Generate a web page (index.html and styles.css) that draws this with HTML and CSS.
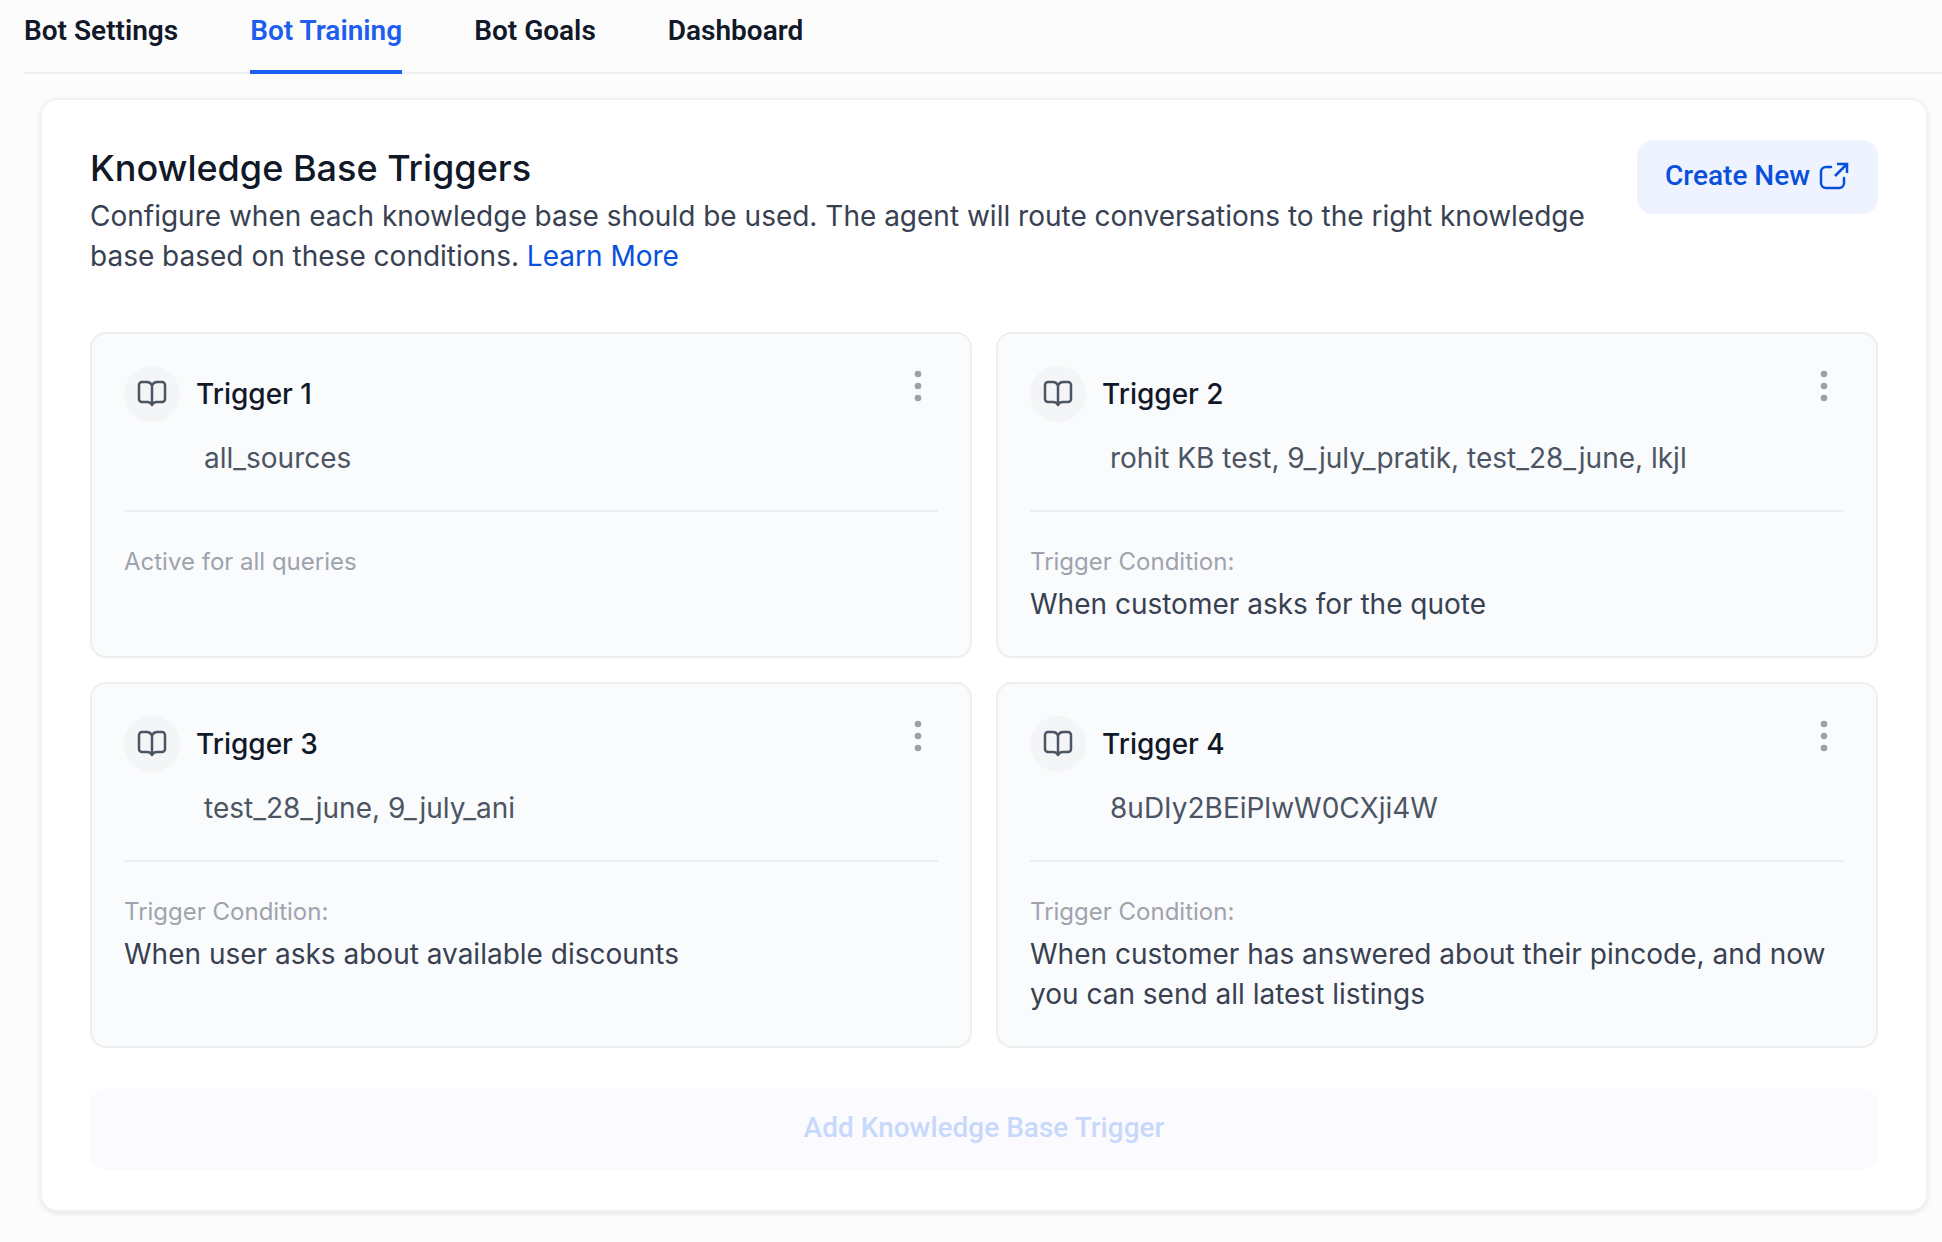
FILE: index.html
```html
<!DOCTYPE html>
<html lang="en">
<head>
    <meta charset="UTF-8">
    <meta name="viewport" content="width=device-width, initial-scale=1.0">
    <title>Bot Training</title>
    <link rel="stylesheet" href="styles.css">
</head>
<body>
    <!-- icons shared by the cards -->
    <svg class="sprite" aria-hidden="true">
        <symbol id="icon-book" viewBox="0 0 32 32">
            <path d="M16 7.500C15 5.200 13.200 4 11 4H6a3 3 0 0 0-3 3v14a3 3 0 0 0 3 3h5c2.500 0 4.200 1 5 3 .8-2 2.500-3 5-3h5a3 3 0 0 0 3-3V7a3 3 0 0 0-3-3h-5c-2.200 0-4 1.200-5 3.500zM16 7.500V27"/>
        </symbol>
        <symbol id="icon-dots" viewBox="0 0 40 40">
            <circle cx="20" cy="8" r="3.3"/>
            <circle cx="20" cy="20" r="3.3"/>
            <circle cx="20" cy="32" r="3.3"/>
        </symbol>
    </svg>

    <nav class="tabs">
        <a href="#settings">Bot Settings</a>
        <a href="#training" class="active">Bot Training</a>
        <a href="#goals">Bot Goals</a>
        <a href="#dashboard">Dashboard</a>
    </nav>

    <main class="panel">
        <div class="panel-header">
            <div class="panel-intro">
                <h1>Knowledge Base Triggers</h1>
                <p>Configure when each knowledge base should be used. The agent will route conversations to the right knowledge base based on these conditions. <a href="#learn">Learn More</a></p>
            </div>
            <button class="create-btn">
                Create New
                <svg viewBox="0 0 32 32" aria-hidden="true">
                    <path stroke-linecap="round" d="M13 8H8a5 5 0 0 0-5 5v11a5 5 0 0 0 5 5h13a5 5 0 0 0 5-5v-5"/>
                    <path d="M17 17 28 6M19 5h10v9"/>
                </svg>
            </button>
        </div>

        <div class="trigger-grid">
            <section class="card">
                <div class="card-header">
                    <span class="card-icon"><svg><use href="#icon-book"/></svg></span>
                    <h2>Trigger 1</h2>
                    <button class="menu-btn" aria-label="Trigger 1 options"><svg><use href="#icon-dots"/></svg></button>
                </div>
                <p class="sources">all_sources</p>
                <div class="condition">
                    <p class="label">Active for all queries</p>
                </div>
            </section>

            <section class="card">
                <div class="card-header">
                    <span class="card-icon"><svg><use href="#icon-book"/></svg></span>
                    <h2>Trigger 2</h2>
                    <button class="menu-btn" aria-label="Trigger 2 options"><svg><use href="#icon-dots"/></svg></button>
                </div>
                <p class="sources">rohit KB test, 9_july_pratik, test_28_june, lkjl</p>
                <div class="condition">
                    <p class="label">Trigger Condition:</p>
                    <p>When customer asks for the quote</p>
                </div>
            </section>

            <section class="card">
                <div class="card-header">
                    <span class="card-icon"><svg><use href="#icon-book"/></svg></span>
                    <h2>Trigger 3</h2>
                    <button class="menu-btn" aria-label="Trigger 3 options"><svg><use href="#icon-dots"/></svg></button>
                </div>
                <p class="sources">test_28_june, 9_july_ani</p>
                <div class="condition">
                    <p class="label">Trigger Condition:</p>
                    <p>When user asks about available discounts</p>
                </div>
            </section>

            <section class="card">
                <div class="card-header">
                    <span class="card-icon"><svg><use href="#icon-book"/></svg></span>
                    <h2>Trigger 4</h2>
                    <button class="menu-btn" aria-label="Trigger 4 options"><svg><use href="#icon-dots"/></svg></button>
                </div>
                <p class="sources">8uDIy2BEiPlwW0CXji4W</p>
                <div class="condition">
                    <p class="label">Trigger Condition:</p>
                    <p>When customer has answered about their pincode, and now you can send all latest listings</p>
                </div>
            </section>
        </div>

        <button class="add-btn" disabled>Add Knowledge Base Trigger</button>
    </main>
</body>
</html>
```
FILE: styles.css
```css
* {
    box-sizing: border-box;
}
body {
    margin: 0;
    background: #fcfcfd;
    color: #374151;
    font-family: Inter, "Liberation Sans", sans-serif;
    font-size: 28px;
    line-height: 40px;
    font-optical-sizing: none;
}
h1, h2, p {
    margin: 0;
}
a {
    color: #0850dc;
    text-decoration: none;
}
button {
    border: none;
    cursor: pointer;
}
.sprite {
    display: none;
}

/* tabs */
.tabs {
    display: flex;
    gap: 72px;
    margin-left: 24px;
    border-bottom: 2px solid #eff0f2;
    font-family: Roboto, "Liberation Sans", sans-serif;
    font-weight: 600;
}
.tabs a {
    padding: 11px 0 19px;
    margin-bottom: -2px;
    border-bottom: 4px solid transparent;
    color: #111827;
}
.tabs a.active {
    color: #1d5eee;
    border-color: #1d5eee;
}

/* main panel */
.panel {
    margin: 26px 16px 32px 42px;
    padding: 40px 48px;
    background: #fff;
    border-radius: 16px;
    box-shadow: 0 0 0 2px #f1f2f3, 0 2px 6px rgba(0, 0, 0, 0.16);
}
.panel-header {
    display: flex;
    align-items: flex-start;
    justify-content: space-between;
    gap: 48px;
    margin-bottom: 56px;
}
.panel-header h1 {
    color: #111827;
    font-size: 36px;
    font-weight: 500;
    line-height: 56px;
}
.create-btn {
    display: flex;
    align-items: center;
    gap: 8px;
    flex-shrink: 0;
    height: 74px;
    padding: 0 28px 4px;
    border-radius: 16px;
    background: #eef3ff;
    color: #0850dc;
    font-family: Roboto, "Liberation Sans", sans-serif;
    font-size: 28px;
    font-weight: 500;
}
.create-btn svg {
    width: 32px;
    height: 32px;
    fill: none;
    stroke: currentColor;
    stroke-width: 2.5;
}

/* trigger cards */
.trigger-grid {
    display: grid;
    grid-template-columns: 1fr 1fr;
    gap: 24px;
}
.card {
    padding: 32px;
    border: 2px solid #eceeef;
    border-radius: 16px;
    background: #fafbfc;
}
.card-header {
    display: flex;
    align-items: center;
    gap: 16px;
    margin-bottom: 16px;
}
.card-header h2 {
    flex: 1;
    color: #111827;
    font-size: 28px;
    font-weight: 500;
}
.card-icon {
    display: flex;
    align-items: center;
    justify-content: center;
    width: 56px;
    height: 56px;
    border-radius: 50%;
    background: #f4f5f6;
}
.card-icon svg {
    width: 32px;
    height: 32px;
    fill: none;
    stroke: #4b5563;
    stroke-width: 2.5;
    stroke-linejoin: round;
}
.menu-btn {
    align-self: flex-start;
    width: 40px;
    height: 40px;
    padding: 0;
    background: none;
}
.menu-btn svg {
    display: block;
    width: 40px;
    height: 40px;
    fill: #9ca0a8;
}
.sources {
    padding: 0 0 32px 80px;
    color: #4b5563;
}
.condition {
    padding-top: 32px;
    border-top: 2px solid #eceeef;
}
.condition .label {
    margin-bottom: 4px;
    color: #9ea3ad;
    font-size: 24px;
    line-height: 36px;
}

.add-btn {
    width: 100%;
    height: 82px;
    margin-top: 40px;
    padding: 0 0 4px;
    border-radius: 16px;
    background: #fbfbff;
    color: #c8d8fb;
    font-family: Roboto, "Liberation Sans", sans-serif;
    font-size: 28px;
    font-weight: 500;
    cursor: default;
}
```
